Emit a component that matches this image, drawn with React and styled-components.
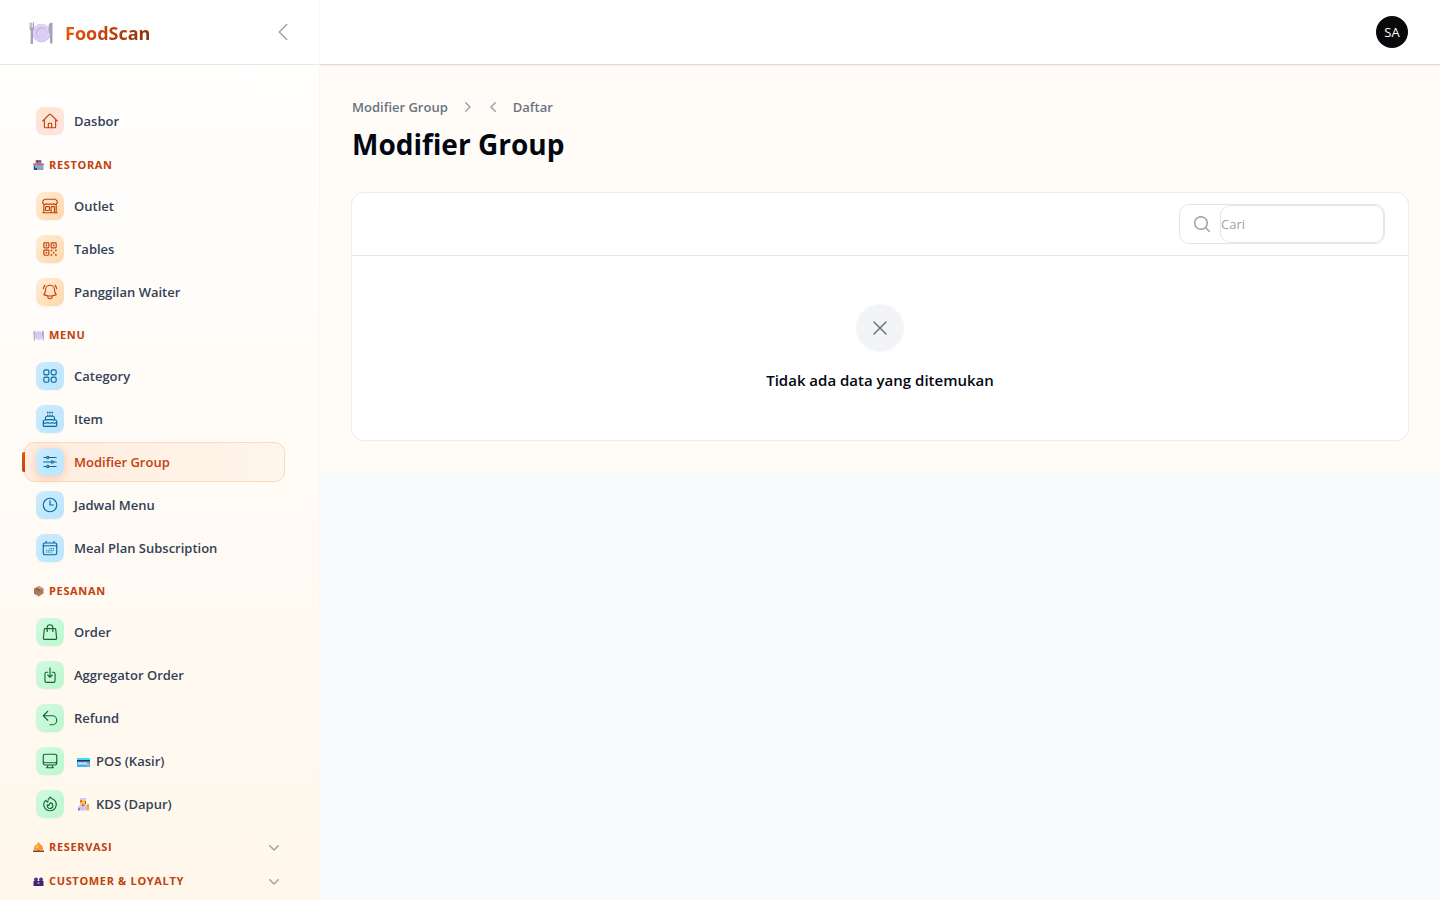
import React, { useState } from "react";
import styled, { createGlobalStyle } from "styled-components";
import {
  HiOutlineHome,
  HiOutlineBuildingStorefront,
  HiOutlineQrCode,
  HiOutlineBellAlert,
  HiOutlineSquares2X2,
  HiOutlineCake,
  HiOutlineAdjustmentsHorizontal,
  HiOutlineClock,
  HiOutlineCalendarDays,
  HiOutlineShoppingBag,
  HiOutlineArrowDownOnSquare,
  HiOutlineArrowUturnLeft,
  HiOutlineComputerDesktop,
  HiOutlineFire,
  HiOutlineChevronLeft,
  HiOutlineXMark,
  HiMiniChevronDown,
  HiMiniChevronLeft,
  HiMiniChevronRight,
  HiMiniMagnifyingGlass,
} from "react-icons/hi2";

const GlobalStyle = createGlobalStyle`
  * {
    box-sizing: border-box;
  }

  body {
    margin: 0;
    background: #f9fafb;
    color: #030712;
    font-family: "Open Sans", "Noto Sans", sans-serif;
    font-size: 14px;
    line-height: 20px;
  }

  button,
  input {
    font: inherit;
  }

  svg {
    display: block;
    flex-shrink: 0;
  }
`;

const Layout = styled.div`
  display: flex;
  height: 100vh;
  overflow: hidden;
`;

const Sidebar = styled.aside`
  display: flex;
  flex-direction: column;
  flex: 0 0 320px;
  background: linear-gradient(180deg, #ffffff 0%, #fffcf8 40%, #fff7eb 100%);
  border-right: 1px solid #fff7ed;
`;

const SidebarHeader = styled.header`
  display: flex;
  align-items: center;
  justify-content: space-between;
  flex: 0 0 65px;
  padding: 0 24px;
  background: #fff;
  border-bottom: 1px solid #e7e7ea;
`;

const Brand = styled.a`
  display: flex;
  align-items: center;
  gap: 12px;
  padding: 2px 0 0 5px;
  text-decoration: none;
`;

const BrandName = styled.span`
  font-size: 18px;
  line-height: 28px;
  font-weight: 700;
  color: transparent;
  background: linear-gradient(135deg, #f76002 0%, #c2410c 50%, #7c2d12 100%);
  background-clip: text;
`;

const IconButton = styled.button`
  display: flex;
  padding: 0;
  border: none;
  background: none;
  color: #9ca3af;
  cursor: pointer;
`;

const Nav = styled.nav`
  flex: 1;
  min-height: 0;
  overflow: hidden;
  padding: 36px 34px 0 24px;
`;

const GroupHeader = styled.button`
  display: flex;
  align-items: center;
  gap: 5px;
  width: 100%;
  height: 22px;
  margin-top: 12px;
  padding: 0 1px 0 9px;
  border: none;
  background: none;
  color: #c2410c;
  font-size: 11px;
  font-weight: 700;
  letter-spacing: 0.06em;
  text-transform: uppercase;
  cursor: pointer;

  svg:last-child:not(:first-child) {
    margin-left: auto;
    color: #9ca3af;
  }
`;

const List = styled.ul`
  display: flex;
  flex-direction: column;
  gap: 3px;
  margin: ${(props) => (props.$first ? "0 0 13px" : "10px 0 0")};
  padding: 0;
  list-style: none;
`;

const Item = styled.li`
  position: relative;

  &::before {
    content: "";
    display: ${(props) => (props.$active ? "block" : "none")};
    position: absolute;
    left: -2px;
    top: 10px;
    width: 3px;
    height: 20px;
    border-radius: 2px 0 0 2px;
    background: linear-gradient(180deg, #ea580c, #c2410c);
  }
`;

const ItemLink = styled.a`
  display: flex;
  align-items: center;
  gap: 10px;
  height: 40px;
  padding: 0 11px;
  border: 1px solid ${(props) => (props.$active ? "#fdd9b9" : "transparent")};
  border-radius: 10px;
  background: ${(props) =>
    props.$active ? "linear-gradient(90deg, #ffeddf, #fff5eb)" : "none"};
  color: ${(props) => (props.$active ? "#c2410c" : "#334155")};
  font-size: 13px;
  font-weight: 600;
  text-decoration: none;
`;

const tones = {
  home: ["#ffe6cf", "#fee2e2", "#c2410c"],
  orange: ["#ffedd5", "#fed7aa", "#c2410c"],
  blue: ["#cdeafc", "#bae6fd", "#0369a1"],
  green: ["#d1fae0", "#bbf7d0", "#166534"],
};

const IconTile = styled.span`
  display: flex;
  align-items: center;
  justify-content: center;
  width: 28px;
  height: 28px;
  border-radius: 8px;
  color: ${(props) => tones[props.$tone][2]};
  background: linear-gradient(
    135deg,
    ${(props) => tones[props.$tone][0]},
    ${(props) => tones[props.$tone][1]}
  );
  box-shadow: ${(props) =>
    props.$active
      ? "0 2px 8px rgba(234, 88, 12, 0.25)"
      : "0 1px 2px rgba(0, 0, 0, 0.04)"};
`;

const ItemLabel = styled.span`
  display: flex;
  align-items: center;
  gap: 5px;
  padding-left: ${(props) => (props.$emoji ? "2px" : 0)};
`;

const Content = styled.div`
  flex: 1;
  min-width: 0;
`;

const Topbar = styled.header`
  display: flex;
  align-items: center;
  justify-content: flex-end;
  height: 65px;
  padding: 0 32px;
  background: #fff;
  border-bottom: 1px solid #ead8cd;
`;

const Avatar = styled.button`
  width: 32px;
  height: 32px;
  padding: 0;
  border: none;
  border-radius: 50%;
  background: #09090b;
  color: #fff;
  font-size: 13px;
  cursor: pointer;
`;

const Main = styled.main`
  padding: 32px;
  background: #fffcf7;
  box-shadow: inset 0 1px 0 #f8f0ea;
`;

const Breadcrumbs = styled.ol`
  display: flex;
  align-items: center;
  margin: 0;
  padding: 0;
  list-style: none;
`;

const Crumb = styled.li`
  display: flex;
  align-items: center;

  svg {
    margin-left: 9px;
    color: #9ca3af;
  }

  svg + svg {
    margin: 0 9px 0 7px;
  }
`;

const CrumbLink = styled.a`
  color: #6b7280;
  font-size: 13px;
  font-weight: 600;
  text-decoration: none;
`;

const Title = styled.h1`
  margin: 7px 0 29px;
  font-size: 28px;
  line-height: 40px;
  font-weight: 700;
`;

const Card = styled.section`
  border-radius: 12px;
  background: #fff;
  box-shadow: 0 0 0 1px #f1ece8, 0 1px 2px rgba(0, 0, 0, 0.05);
`;

const Toolbar = styled.div`
  display: flex;
  justify-content: flex-end;
  padding: 11px 23px;
  border-bottom: 1px solid #e5e7eb;
`;

const SearchBox = styled.label`
  display: flex;
  align-items: center;
  width: 206px;
  height: 40px;
  border: 1px solid #e2e5ea;
  border-radius: 10px;
  background: #fff;
  color: #9ca3af;

  svg {
    margin: 0 8px 0 12px;
  }
`;

const SearchInput = styled.input`
  flex: 1;
  min-width: 0;
  height: 38px;
  padding: 0;
  border: 1px solid #e2e8f0;
  border-radius: 10px;
  outline: none;
  background: #fff;
  font-size: 13px;

  &::placeholder {
    color: #9ca3af;
    opacity: 1;
  }
`;

const Empty = styled.div`
  display: flex;
  flex-direction: column;
  align-items: center;
  gap: 16px;
  padding: 48px 24px;
`;

const EmptyIcon = styled.div`
  display: flex;
  align-items: center;
  justify-content: center;
  width: 48px;
  height: 48px;
  border-radius: 50%;
  background: #f3f4f6;
  color: #6b7280;
`;

const EmptyTitle = styled.h2`
  margin: 0;
  font-size: 15px;
  line-height: 24px;
  font-weight: 600;
`;

const PlateIcon = ({ size = 24 }) => (
  <svg width={size} height={size} viewBox="0 0 24 24">
    <circle cx="12.5" cy="12" r="9.3" fill="#d2c0ee" />
    <circle cx="12.5" cy="11.5" r="8.6" fill="#e0d2f7" />
    <circle cx="12.5" cy="12" r="6" fill="#c6b3e6" />
    <circle cx="13" cy="12.5" r="5.3" fill="#dccdf4" />
    <path
      d="M0.6 1.5h1v5h0.7v-5h1v5h0.7v-5h1v6.5l-1 1.5v13.500h-2.400v-13.500l-1-1.500z"
      fill="#aaa0b8"
    />
    <path d="M21 22.500v-10l-1.300-1v-7q0.300-3 3.800-3v21z" fill="#aaa0b8" />
  </svg>
);

const StoreIcon = () => (
  <svg width="11" height="12" viewBox="0 0 11 12">
    <path d="M2.5 1h6v4h-6z" fill="#9b93a8" />
    <path d="M3.5 1.5h2v2h-2zM6.5 1.5h1v2h-1z" fill="#3d2f52" />
    <path d="M0.5 5h10v6h-10z" fill="#99a0ad" />
    <path d="M0 4.500h11v1.500h-11z" fill="#e0567c" />
    <path d="M1 7h3v4h-3z" fill="#264a91" />
    <path d="M2 7h2v2h-2zM6 7.500h4v1.500h-4z" fill="#43c9ee" />
  </svg>
);

const BoxIcon = () => (
  <svg width="11" height="12" viewBox="0 0 11 12">
    <path d="M1 3.5l5-2.5 4.500 2.500v5l-5 3-4.500-3z" fill="#b37b5c" />
    <path d="M1 3.5l5-2.5 4.500 2.500-5 2z" fill="#cf9c78" />
    <path d="M1 3.5l4.500 2v6l-4.500-3z" fill="#a87255" />
    <path d="M3 2.5l4.500 2v2l-4.500-2z" fill="#8a5d4e" />
    <path d="M3 9l2 1v1.500l-2-1z" fill="#d5bce0" />
  </svg>
);

const BellhopIcon = () => (
  <svg width="11" height="12" viewBox="0 0 11 12">
    <path
      d="M4.500 1.500h2v1.500c2.500 0.600 3.700 3 3.700 6h-9.400c0-3 1.200-5.400 3.700-6z"
      fill="#f59b2d"
    />
    <path d="M3.500 4h2v3h-3z" fill="#ffbe5c" />
    <path d="M0 9.500h11v1.500h-11z" fill="#704239" />
    <path d="M4.500 9h2v1h-2z" fill="#c64d28" />
  </svg>
);

const PeopleIcon = () => (
  <svg width="11" height="12" viewBox="0 0 11 12">
    <circle cx="3" cy="4.500" r="2" fill="#533285" />
    <circle cx="8" cy="4.500" r="2" fill="#533285" />
    <path d="M0.500 6h10v5h-10z" fill="#42246f" />
    <path d="M4.500 7h2v2h-2z" fill="#a58bce" />
  </svg>
);

const CardIcon = () => (
  <svg width="15" height="14" viewBox="0 0 15 14">
    <path d="M1 4h13v9h-13z" fill="#43b3ef" />
    <path d="M1 4h13v2h-13z" fill="#3bdcf5" />
    <path d="M1 6h13v1.500h-13z" fill="#402a55" />
    <path d="M2 8.500h9v2h-9z" fill="#dcdcf0" />
    <path d="M11 10h2v2h-2z" fill="#f5bd3d" />
  </svg>
);

const CookIcon = () => (
  <svg width="15" height="14" viewBox="0 0 15 14">
    <path d="M4 1h6v3h-6z" fill="#d7c7ea" />
    <path d="M4 3.500h6v4h-6z" fill="#ffc51f" />
    <path d="M4 3.500h2v1.500h-2zM9 4h1v3h-1z" fill="#a85a3c" />
    <path d="M2 9.500l3-2h5l3 2v4h-11z" fill="#d3c3ea" />
    <path d="M5 7.500h4l-2 2z" fill="#e8376a" />
    <path d="M11 7h2v6h-2z" fill="#f6a72c" />
    <path d="M2 11h2v2.500h-2z" fill="#9f82c5" />
  </svg>
);

const home = { label: "Dasbor", icon: HiOutlineHome };

const groups = [
  {
    label: "Restoran",
    emoji: <StoreIcon />,
    tone: "orange",
    items: [
      { label: "Outlet", icon: HiOutlineBuildingStorefront },
      { label: "Tables", icon: HiOutlineQrCode },
      { label: "Panggilan Waiter", icon: HiOutlineBellAlert },
    ],
  },
  {
    label: "Menu",
    emoji: <PlateIcon size={11} />,
    tone: "blue",
    items: [
      { label: "Category", icon: HiOutlineSquares2X2 },
      { label: "Item", icon: HiOutlineCake },
      { label: "Modifier Group", icon: HiOutlineAdjustmentsHorizontal },
      { label: "Jadwal Menu", icon: HiOutlineClock },
      { label: "Meal Plan Subscription", icon: HiOutlineCalendarDays },
    ],
  },
  {
    label: "Pesanan",
    emoji: <BoxIcon />,
    tone: "green",
    items: [
      { label: "Order", icon: HiOutlineShoppingBag },
      { label: "Aggregator Order", icon: HiOutlineArrowDownOnSquare },
      { label: "Refund", icon: HiOutlineArrowUturnLeft },
      { label: "POS (Kasir)", icon: HiOutlineComputerDesktop, emoji: <CardIcon /> },
      { label: "KDS (Dapur)", icon: HiOutlineFire, emoji: <CookIcon /> },
    ],
  },
  { label: "Reservasi", emoji: <BellhopIcon /> },
  { label: "Customer & Loyalty", emoji: <PeopleIcon /> },
];

const NavItem = ({ item, tone, active, onSelect }) => {
  const Icon = item.icon;
  return (
    <Item $active={active}>
      <ItemLink
        href="#"
        $active={active}
        aria-current={active ? "page" : undefined}
        onClick={() => onSelect(item.label)}
      >
        <IconTile $tone={tone} $active={active}>
          <Icon size={18} />
        </IconTile>
        <ItemLabel $emoji={!!item.emoji}>
          {item.emoji}
          {item.label}
        </ItemLabel>
      </ItemLink>
    </Item>
  );
};

const App = () => {
  const [active, setActive] = useState("Modifier Group");
  const [search, setSearch] = useState("");

  return (
    <>
      <GlobalStyle />
      <Layout>
        <Sidebar>
          <SidebarHeader>
            <Brand href="#">
              <PlateIcon />
              <BrandName>FoodScan</BrandName>
            </Brand>
            <IconButton aria-label="Collapse sidebar">
              <HiOutlineChevronLeft size={24} />
            </IconButton>
          </SidebarHeader>
          <Nav>
            <List $first>
              <NavItem
                item={home}
                tone="home"
                active={active === home.label}
                onSelect={setActive}
              />
            </List>
            {groups.map((group) => (
              <React.Fragment key={group.label}>
                <GroupHeader>
                  {group.emoji}
                  <span>{group.label}</span>
                  {!group.items && <HiMiniChevronDown size={20} />}
                </GroupHeader>
                {group.items && (
                  <List>
                    {group.items.map((item) => (
                      <NavItem
                        key={item.label}
                        item={item}
                        tone={group.tone}
                        active={active === item.label}
                        onSelect={setActive}
                      />
                    ))}
                  </List>
                )}
              </React.Fragment>
            ))}
          </Nav>
        </Sidebar>
        <Content>
          <Topbar>
            <Avatar aria-label="User menu">SA</Avatar>
          </Topbar>
          <Main>
            <Breadcrumbs>
              <Crumb>
                <CrumbLink href="#">Modifier Group</CrumbLink>
              </Crumb>
              <Crumb>
                <HiMiniChevronRight size={20} />
                <HiMiniChevronLeft size={20} />
                <CrumbLink href="#">Daftar</CrumbLink>
              </Crumb>
            </Breadcrumbs>
            <Title>Modifier Group</Title>
            <Card>
              <Toolbar>
                <SearchBox>
                  <HiMiniMagnifyingGlass size={20} />
                  <SearchInput
                    type="search"
                    placeholder="Cari"
                    aria-label="Cari"
                    value={search}
                    onChange={(e) => setSearch(e.target.value)}
                  />
                </SearchBox>
              </Toolbar>
              <Empty>
                <EmptyIcon>
                  <HiOutlineXMark size={24} />
                </EmptyIcon>
                <EmptyTitle>Tidak ada data yang ditemukan</EmptyTitle>
              </Empty>
            </Card>
          </Main>
        </Content>
      </Layout>
    </>
  );
};

export default App;
